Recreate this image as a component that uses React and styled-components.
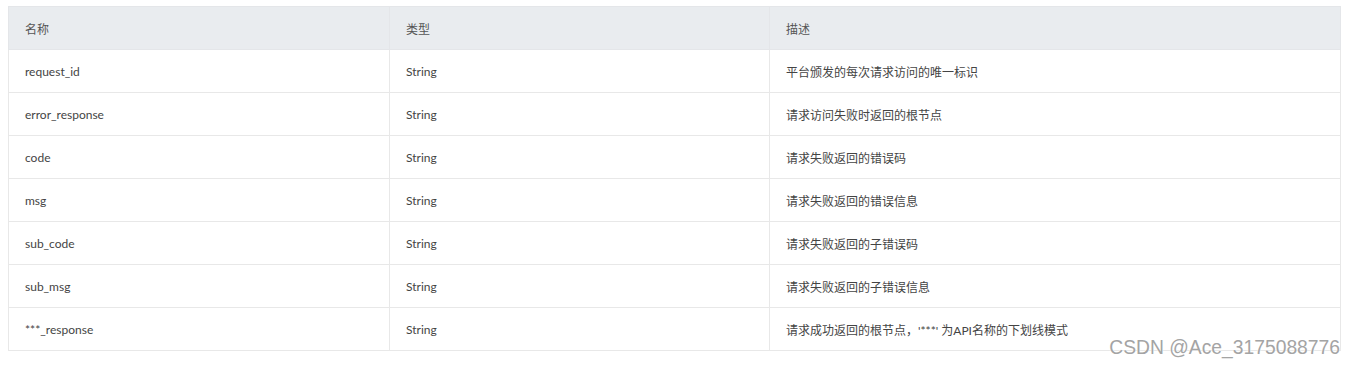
import React from "react";
import styled, { createGlobalStyle } from "styled-components";

const GlobalStyle = createGlobalStyle`
  html, body {
    margin: 0;
    padding: 0;
    background: #fff;
  }
`;

const Page = styled.div`
  position: relative;
  width: 1356px;
  height: 366px;
  padding: 6px 0 0 8px;
  box-sizing: border-box;
  font-family: Lato, "Noto Sans CJK SC", sans-serif;
`;

const Table = styled.table`
  width: 1333px;
  border-collapse: collapse;
  table-layout: fixed;
  font-size: 12px;
  color: #333;
`;

const Th = styled.th`
  height: 42px;
  padding: 0 16px;
  text-align: left;
  font-weight: normal;
  background: #e9ecef;
  border: 1px solid #e4e6e9;
  color: #555;
`;

const Td = styled.td`
  height: 42px;
  padding: 0 16px;
  border: 1px solid #e8e8e8;
  color: #444;
  white-space: nowrap;
`;

const Watermark = styled.div`
  position: absolute;
  right: 16px;
  top: 337px;
  font-family: "Liberation Sans", Arial, sans-serif;
  font-size: 19.3px;
  color: #a4a4a4;
  text-shadow: 0 0 2px #fff, 0 0 1px #fff;
`;

const rows = [
  ["request_id", "String", "平台颁发的每次请求访问的唯一标识"],
  ["error_response", "String", "请求访问失败时返回的根节点"],
  ["code", "String", "请求失败返回的错误码"],
  ["msg", "String", "请求失败返回的错误信息"],
  ["sub_code", "String", "请求失败返回的子错误码"],
  ["sub_msg", "String", "请求失败返回的子错误信息"],
  ["***_response", "String", "请求成功返回的根节点，'***' 为API名称的下划线模式"],
];

export default function App() {
  return (
    <>
      <GlobalStyle />
      <Page>
        <Table>
          <colgroup>
            <col style={{ width: 381 }} />
            <col style={{ width: 380 }} />
            <col style={{ width: 571 }} />
          </colgroup>
          <thead>
            <tr>
              <Th>名称</Th>
              <Th>类型</Th>
              <Th>描述</Th>
            </tr>
          </thead>
          <tbody>
            {rows.map((r) => (
              <tr key={r[0]}>
                <Td>{r[0]}</Td>
                <Td>{r[1]}</Td>
                <Td>{r[2]}</Td>
              </tr>
            ))}
          </tbody>
        </Table>
        <Watermark>CSDN @Ace_3175088776</Watermark>
      </Page>
    </>
  );
}
